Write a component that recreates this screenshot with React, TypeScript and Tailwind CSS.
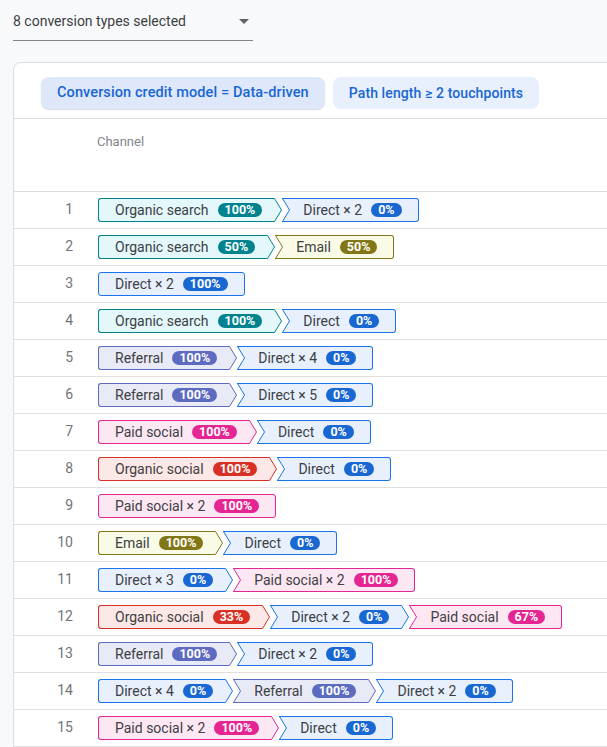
import React from "react";

type Tone = {
  bg: string;
  border: string;
  badge: string;
  fill: string;
  stroke: string;
};

const tones: Record<string, Tone> = {
  search: { bg: "bg-[#e4f7fa]", border: "border-[#00838f]", badge: "bg-[#00838f]", fill: "#e4f7fa", stroke: "#00838f" },
  direct: { bg: "bg-[#e8f0fe]", border: "border-[#1a73e8]", badge: "bg-[#1967d2]", fill: "#e8f0fe", stroke: "#1a73e8" },
  email: { bg: "bg-[#f9fbe7]", border: "border-[#827717]", badge: "bg-[#827717]", fill: "#f9fbe7", stroke: "#827717" },
  referral: { bg: "bg-[#e8eaf6]", border: "border-[#5c6bc0]", badge: "bg-[#5c6bc0]", fill: "#e8eaf6", stroke: "#5c6bc0" },
  paid: { bg: "bg-[#fde7f3]", border: "border-[#e52592]", badge: "bg-[#e52592]", fill: "#fde7f3", stroke: "#e52592" },
  social: { bg: "bg-[#fce8e6]", border: "border-[#d93025]", badge: "bg-[#d93025]", fill: "#fce8e6", stroke: "#d93025" },
};

type Step = [string, string, string];

const rows: Step[][] = [
  [["search", "Organic search", "100%"], ["direct", "Direct × 2", "0%"]],
  [["search", "Organic search", "50%"], ["email", "Email", "50%"]],
  [["direct", "Direct × 2", "100%"]],
  [["search", "Organic search", "100%"], ["direct", "Direct", "0%"]],
  [["referral", "Referral", "100%"], ["direct", "Direct × 4", "0%"]],
  [["referral", "Referral", "100%"], ["direct", "Direct × 5", "0%"]],
  [["paid", "Paid social", "100%"], ["direct", "Direct", "0%"]],
  [["social", "Organic social", "100%"], ["direct", "Direct", "0%"]],
  [["paid", "Paid social × 2", "100%"]],
  [["email", "Email", "100%"], ["direct", "Direct", "0%"]],
  [["direct", "Direct × 3", "0%"], ["paid", "Paid social × 2", "100%"]],
  [["social", "Organic social", "33%"], ["direct", "Direct × 2", "0%"], ["paid", "Paid social", "67%"]],
  [["referral", "Referral", "100%"], ["direct", "Direct × 2", "0%"]],
  [["direct", "Direct × 4", "0%"], ["referral", "Referral", "100%"], ["direct", "Direct × 2", "0%"]],
  [["paid", "Paid social × 2", "100%"], ["direct", "Direct", "0%"]],
];

function Notch({ t }: { t: Tone }) {
  return (
    <svg width="8" height="24" viewBox="0 0 8 24" className="block shrink-0">
      <path d="M0 0 H8 V24 H0 L7.5 12 Z" fill={t.fill} />
      <path d="M0 0.5 H8 M0 23.5 H8 M0.5 0.5 L7.5 12 L0.5 23.5" fill="none" stroke={t.stroke} strokeWidth="1" />
    </svg>
  );
}

function Arrow({ t }: { t: Tone }) {
  return (
    <svg width="8" height="24" viewBox="0 0 8 24" className="block shrink-0">
      <path d="M0 0 H0.5 L7.5 12 L0.5 24 H0 Z" fill={t.fill} />
      <path d="M0 0.5 H0.5 L7.5 12 L0.5 23.5 H0" fill="none" stroke={t.stroke} strokeWidth="1" />
    </svg>
  );
}

function Segment({ step, first, last }: { step: Step; first: boolean; last: boolean }) {
  const t = tones[step[0]];
  return (
    <div className="flex h-6 items-stretch">
      {!first && <Notch t={t} />}
      <div
        className={`flex items-center gap-[9px] border-y ${t.bg} ${t.border} ${
          first ? "rounded-l-[3px] border-l pl-4" : "pl-[13px]"
        } ${last ? "rounded-r-[3px] border-r pr-4" : "pr-3"}`}
      >
        <span className="text-[14px] leading-none text-[#3c4043]">{step[1]}</span>
        <span className={`rounded-full px-[7px] text-[12.5px] font-bold leading-[14px] text-white ${t.badge}`}>
          {step[2]}
        </span>
      </div>
      {!last && <Arrow t={t} />}
    </div>
  );
}

export default function App() {
  return (
    <div className="h-[747px] w-[607px] overflow-hidden bg-[#f8f9fa] font-['Roboto',sans-serif]">
      <div className="ml-[13px] flex h-[41px] w-[240px] items-center justify-between border-b border-[#80868b] pt-[3px]">
        <span className="text-[14px] text-[#3c4043]">8 conversion types selected</span>
        <svg width="10" height="5" viewBox="0 0 10 5" className="mr-[4px]">
          <path d="M0 0 H10 L5 5 Z" fill="#5f6368" />
        </svg>
      </div>

      <div className="ml-[13px] mt-[21px] w-[640px] rounded-tl-lg border border-[#dadce0] bg-white">
        <div className="flex h-[56px] items-start gap-2 border-b border-[#dadce0] pl-[27px] pt-[14px]">
          <div className="flex h-8 items-center rounded-lg bg-[#dfe8fb] px-4 text-[14.5px] font-medium tracking-[0.1px] text-[#1967d2] shadow-[0_1px_1px_rgba(60,64,67,0.2)]">
            Conversion credit model = Data-driven
          </div>
          <div className="flex h-8 items-center rounded-lg bg-[#e8f0fe] px-4 text-[14px] font-medium tracking-[0.1px] text-[#1967d2]">
            Path length ≥ 2 touchpoints
          </div>
        </div>

        <div className="h-[73px] border-b border-[#dadce0] pl-[83px] pt-[13px] text-[13px] text-[#80868b]">
          Channel
        </div>

        {rows.map((row, i) => (
          <div key={i} className="flex h-[37px] items-center border-b border-[#e0e0e0] pb-px">
            <div className="w-[60px] pr-px text-right text-[14px] text-[#70757a]">{i + 1}</div>
            <div className="ml-6 flex items-center">
              {row.map((s, j) => (
                <Segment key={j} step={s} first={j === 0} last={j === row.length - 1} />
              ))}
            </div>
          </div>
        ))}
      </div>
    </div>
  );
}
